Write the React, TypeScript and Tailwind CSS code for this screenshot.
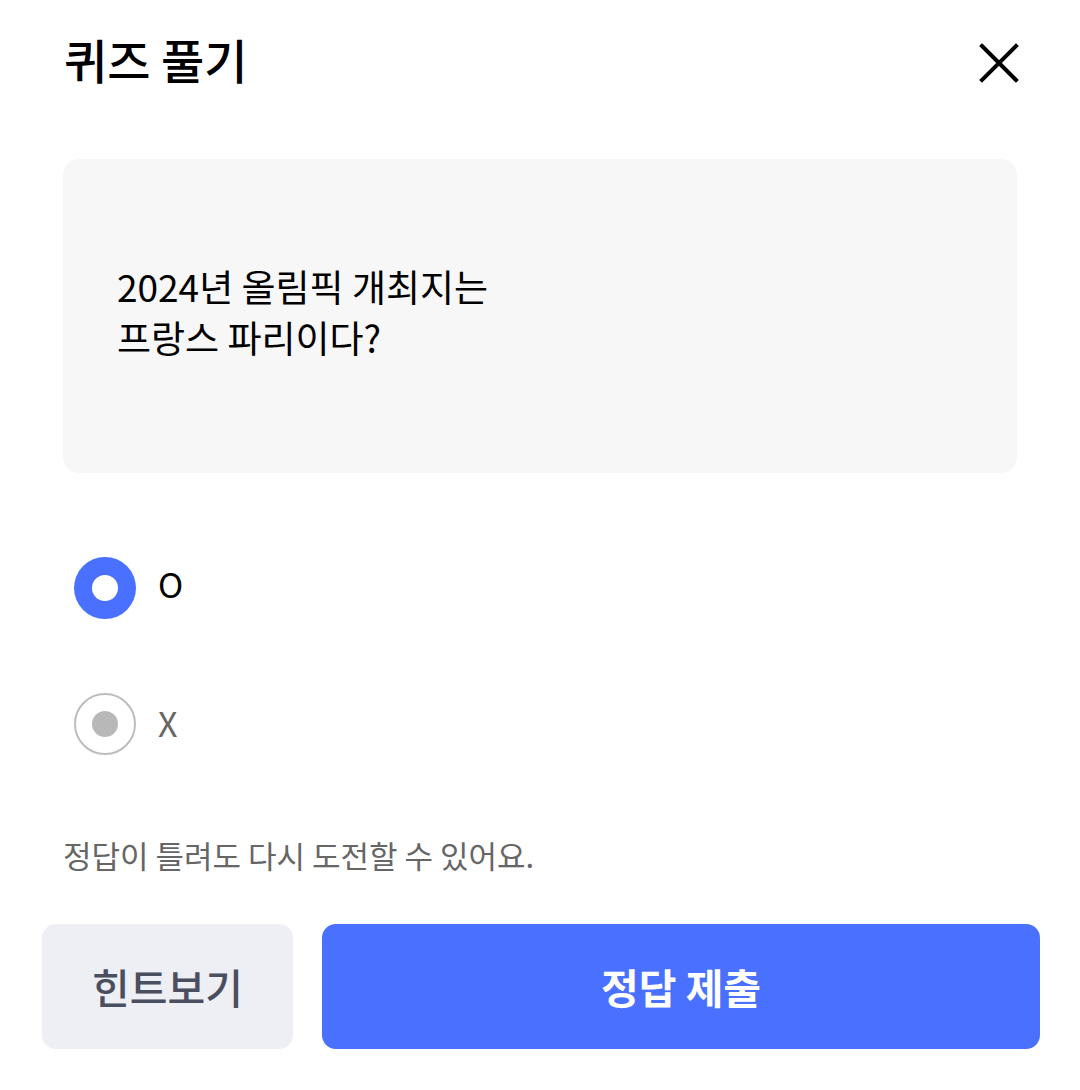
import React from "react";

export default function App() {
  const font = { fontFamily: '"Noto Sans CJK KR", "Noto Sans", sans-serif' };
  return (
    <div className="w-[1080px] h-[1090px] bg-white relative" style={font}>
      <div className="flex items-center justify-between pl-[64px] pr-[60px] pt-[28px] h-[98px]">
        <h1 className="text-[47px] font-medium text-black leading-none -mt-[10px]">퀴즈 풀기</h1>
        <svg width="40" height="40" viewBox="0 0 40 40" className="mr-[1px]">
          <path d="M3 3 L37 37 M37 3 L3 37" stroke="#000" strokeWidth="4" strokeLinecap="square" />
        </svg>
      </div>

      <div className="mx-[63px] mt-[61px] h-[314px] rounded-[16px] bg-[#f7f7f7] flex items-center pl-[54px]">
        <p className="text-[37px] leading-[51px] text-black mb-[8px]">
          2024년 올림픽 개최지는
          <br />
          프랑스 파리이다?
        </p>
      </div>

      <div className="pl-[74px] mt-[84px] flex flex-col gap-[74px]">
        <div className="flex items-center gap-[22px]">
          <div className="w-[62px] h-[62px] rounded-full bg-[#4a70ff] flex items-center justify-center">
            <div className="w-[26px] h-[26px] rounded-full bg-white" />
          </div>
          <span className="text-[34px] text-black leading-none -mt-[8px]">O</span>
        </div>
        <div className="flex items-center gap-[22px]">
          <div className="w-[62px] h-[62px] rounded-full border-2 border-[#bdbdbd] flex items-center justify-center">
            <div className="w-[26px] h-[26px] rounded-full bg-[#b8b8b8]" />
          </div>
          <span className="text-[34px] text-[#666666] leading-none -mt-[2px]">X</span>
        </div>
      </div>

      <p className="pl-[63px] mt-[84px] text-[31px] text-[#666666] leading-none">
        정답이 틀려도 다시 도전할 수 있어요.
      </p>

      <div className="flex gap-[29px] pl-[42px] pr-[40px] mt-[54px]">
        <button className="w-[251px] h-[125px] rounded-[14px] bg-[#eeeff4] text-[41px] font-medium text-[#4a4e5e]">
          힌트보기
        </button>
        <button className="flex-1 h-[125px] rounded-[14px] bg-[#4a70ff] text-[41px] font-bold text-white">
          정답 제출
        </button>
      </div>
    </div>
  );
}
